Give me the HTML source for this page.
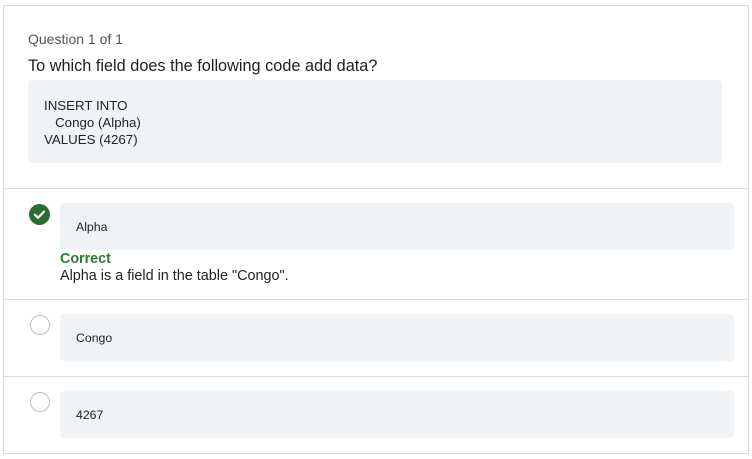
<!DOCTYPE html>
<html><head><style>
*{margin:0;padding:0;box-sizing:border-box}
body{width:752px;height:459px;background:#fff;font-family:"Liberation Sans",sans-serif;color:#1f1f1f;position:relative;overflow:hidden}
.card{position:absolute;left:3px;top:5px;width:746px;height:449px;border:1px solid #d9d9d9}
.a{position:absolute}
.hr{position:absolute;left:4px;width:744px;height:1px;background:#d9d9d9}
.box{position:absolute;background:#f0f3f6;border-radius:4px}
.opt{font-size:12.3px;color:#222}
.radio{position:absolute;left:30px;width:20px;height:20px;border:1px solid #bdbdbd;border-radius:50%;background:#fff}
</style></head><body>
<div class="card"></div>
<div class="a" style="left:28px;top:31px;font-size:14px;color:#555">Question 1 of 1</div>
<div class="a" style="left:28px;top:57px;font-size:16.3px;color:#1f1f1f">To which field does the following code add data?</div>
<div class="box" style="left:28px;top:80px;width:694px;height:83px"></div>
<div class="a" style="left:44px;top:97px;font-size:13.3px;line-height:17px;color:#222;white-space:pre">INSERT INTO
   Congo (Alpha)
VALUES (4267)</div>
<div class="hr" style="top:188px"></div>
<div class="a" style="left:29px;top:204px;width:21px;height:21px;border-radius:50%;background:#2a6e2f">
<svg width="21" height="21" viewBox="0 0 21 21"><path d="M6 10.8l3 3 6-6.2" stroke="#fff" stroke-width="2.2" fill="none" stroke-linecap="round" stroke-linejoin="round"/></svg></div>
<div class="box" style="left:60px;top:203px;width:674px;height:47px"></div>
<div class="a opt" style="left:76px;top:220px">Alpha</div>
<div class="a" style="left:60px;top:251px;font-size:14.3px;font-weight:bold;color:#2e7d32">Correct</div>
<div class="a" style="left:60px;top:268px;font-size:14.4px;color:#222">Alpha is a field in the table "Congo".</div>
<div class="hr" style="top:299px"></div>
<div class="radio" style="top:315px"></div>
<div class="box" style="left:60px;top:314px;width:674px;height:47px"></div>
<div class="a opt" style="left:76px;top:331px">Congo</div>
<div class="hr" style="top:376px"></div>
<div class="radio" style="top:392px"></div>
<div class="box" style="left:60px;top:391px;width:674px;height:47px"></div>
<div class="a opt" style="left:76px;top:408px">4267</div>
</body></html>
